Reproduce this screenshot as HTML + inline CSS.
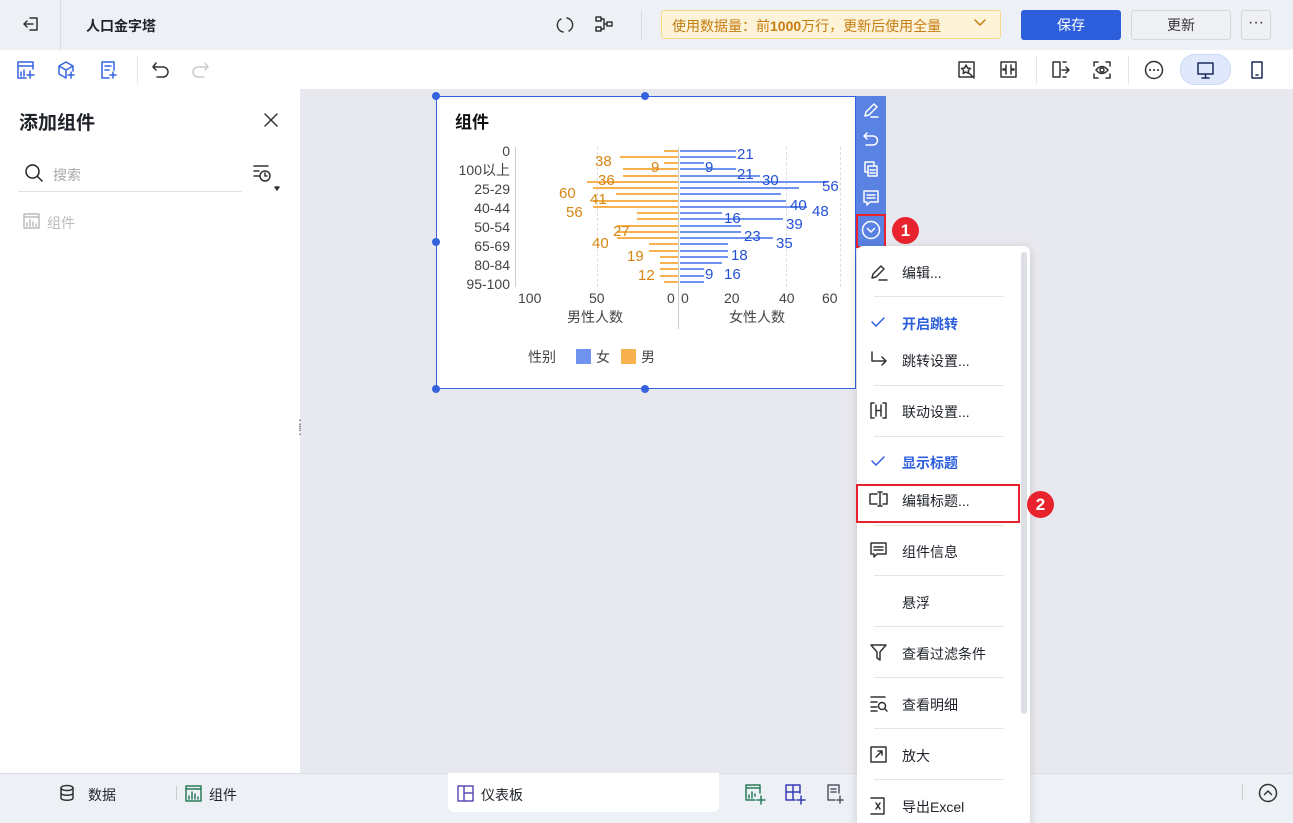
<!DOCTYPE html><html><head><meta charset="utf-8"><style>
*{margin:0;padding:0;box-sizing:border-box}
html,body{width:1293px;height:823px;overflow:hidden}
body{background:#e8e9ee;font-family:"Liberation Sans","Noto Sans CJK SC",sans-serif;position:relative;color:#1f2329}
.a{position:absolute}
.t{font-size:14px;white-space:nowrap}
svg.i{position:absolute;fill:none;stroke-width:1.5;stroke-linecap:round;stroke-linejoin:round}
.bl{position:absolute;height:2px;background:#6f93ee}
.or{position:absolute;height:2px;background:#f7b14f}
.nb{position:absolute;font-size:15px;color:#2451d6;line-height:15px}
.no{position:absolute;font-size:15px;color:#d58612;line-height:15px}
.mi{position:absolute;left:902px;font-size:14px;color:#1f2329}
.sep{position:absolute;left:874px;width:130px;height:1px;background:#e3e5ea}
</style></head><body>
<!-- top bar -->
<div class="a" style="left:0;top:0;width:1293px;height:50px;background:#edf0f5"></div>
<div class="a" style="left:60px;top:0;width:1px;height:50px;background:#dadde3"></div>
<svg class="i" style="left:22px;top:15px" width="18" height="18" stroke="#333"><path d="M8 3h7v12H8M11 9H2M5 6L2 9l3 3"/></svg>
<div class="a t" style="left:86px;top:16px;font-weight:bold;font-size:14px">人口金字塔</div>
<svg class="i" style="left:555px;top:15px" width="20" height="20" stroke="#333" stroke-width="2"><path d="M6 4A7 7 0 0 0 8 17M12 3a7 7 0 0 1 2 13"/></svg>
<svg class="i" style="left:595px;top:15px" width="20" height="20" stroke="#333"><rect x="1" y="2" width="5" height="4"/><rect x="1" y="12" width="5" height="4"/><rect x="12" y="7" width="5" height="4"/><path d="M6 4h3v10H6M9 9h3"/></svg>
<div class="a" style="left:641px;top:10px;width:1px;height:30px;background:#dadde3"></div>
<div class="a" style="left:661px;top:10px;width:340px;height:29px;background:#fdf3d9;border:1px solid #f6d88b;border-radius:3px"></div>
<div class="a t" style="left:672px;top:16px;color:#c67d10">使用数据量：前<b>1000</b>万行，更新后使用全量</div>
<svg class="i" style="left:973px;top:17px" width="14" height="12" stroke="#c67d10" stroke-width="2"><path d="M2 3l5 5 5-5"/></svg>
<div class="a" style="left:1021px;top:10px;width:100px;height:30px;background:#2d5fdc;border-radius:3px;color:#fff;font-size:14px;text-align:center;line-height:30px">保存</div>
<div class="a" style="left:1131px;top:10px;width:100px;height:30px;background:#eef0f4;border:1px solid #d4d7dd;border-radius:3px;font-size:14px;text-align:center;line-height:28px;color:#333">更新</div>
<div class="a" style="left:1241px;top:10px;width:30px;height:30px;background:#eef0f4;border:1px solid #d4d7dd;border-radius:3px;text-align:center;line-height:24px;color:#333">···</div>
<!-- toolbar -->
<div class="a" style="left:0;top:50px;width:1293px;height:39px;background:#fff"></div>
<svg class="i" style="left:16px;top:60px" width="20" height="20" stroke="#3563e0"><path d="M2 2h15v7M2 2v16h8M2 6h15M5 16v-4M8 16v-6M14 11v7M11 15h7"/></svg>
<svg class="i" style="left:57px;top:60px" width="20" height="20" stroke="#3563e0"><path d="M9 2l7 4v5M9 2L2 6v8l7 4M2 6l7 4 7-4M9 10v8M14 12v6M11 15h6"/></svg>
<svg class="i" style="left:100px;top:60px" width="20" height="20" stroke="#3563e0"><path d="M2 2h12v8M2 2v16h7M5 6h6M5 10h4M13 12v6M10 15h6"/></svg>
<div class="a" style="left:137px;top:56px;width:1px;height:28px;background:#e3e5ea"></div>
<svg class="i" style="left:151px;top:60px" width="20" height="20" stroke="#333"><path d="M5 3L2 7l3 3M2 7h10a5 5 0 0 1 0 10H6"/></svg>
<svg class="i" style="left:191px;top:60px" width="20" height="20" stroke="#ccc"><path d="M14 3l3 4-3 3M17 7H7a5 5 0 0 0 0 10h6"/></svg>
<svg class="i" style="left:957px;top:60px" width="20" height="20" stroke="#333"><path d="M2 2h15v15H2zM9 5l1.5 3 3 .5-2.2 2 .5 3L9 12l-2.8 1.5.5-3-2.2-2 3-.5zM13 14l4 4"/></svg>
<svg class="i" style="left:999px;top:60px" width="20" height="20" stroke="#333"><path d="M2 2h15v15H2zM7 5v4H4M12 5v4h3M7 14v-4H4M12 14v-4h3"/></svg>
<div class="a" style="left:1036px;top:56px;width:1px;height:28px;background:#e3e5ea"></div>
<svg class="i" style="left:1051px;top:60px" width="20" height="20" stroke="#333"><path d="M9 2H2v15h7V2M12 2h3M12 17h3M11 10h7M15 7l3 3-3 3"/></svg>
<svg class="i" style="left:1092px;top:60px" width="20" height="20" stroke="#333"><path d="M2 6V2h4M14 2h4v4M18 14v4h-4M6 18H2v-4M4 10q6-7 12 0q-6 7-12 0"/><circle cx="10" cy="10" r="2"/></svg>
<div class="a" style="left:1128px;top:56px;width:1px;height:28px;background:#e3e5ea"></div>
<svg class="i" style="left:1144px;top:60px" width="20" height="20" stroke="#333"><circle cx="10" cy="10" r="8.5"/><path d="M6 10h.1M10 10h.1M14 10h.1" stroke-width="2"/></svg>
<div class="a" style="left:1180px;top:54px;width:51px;height:31px;background:#dfe9fb;border:1px solid #c8d8f5;border-radius:15px"></div>
<svg class="i" style="left:1196px;top:60px" width="20" height="20" stroke="#1a2a5a"><path d="M2 3h15v11H2zM9.5 14v4M6 18h7"/></svg>
<svg class="i" style="left:1249px;top:60px" width="16" height="20" stroke="#1a2a5a"><path d="M3 2h10v16H3zM7 15h2"/></svg>
<!-- left panel -->
<div class="a" style="left:0;top:89px;width:300px;height:684px;background:#fff"></div>
<div class="a" style="left:19px;top:108px;font-size:19px;font-weight:bold;color:#1f2329">添加组件</div>
<svg class="i" style="left:262px;top:111px" width="18" height="18" stroke="#333" stroke-width="1.8"><path d="M3 3l12 12M15 3L3 15"/></svg>
<svg class="i" style="left:24px;top:163px" width="20" height="20" stroke="#222" stroke-width="2"><circle cx="8.5" cy="8.5" r="6.5"/><path d="M13.5 13.5L18 18"/></svg>
<div class="a t" style="left:53px;top:165px;color:#aaa">搜索</div>
<div class="a" style="left:18px;top:191px;width:224px;height:1px;background:#dde0e6"></div>
<svg class="i" style="left:252px;top:163px" width="28" height="28" stroke="#333"><path d="M2 3h14M2 8h5M2 13h5"/><circle cx="13" cy="13" r="5"/><path d="M13 10v3h2"/><path d="M23 24l2 3 2-3z" fill="#333"/></svg>
<svg class="i" style="left:23px;top:213px" width="17" height="16" stroke="#bbb" stroke-width="1"><path d="M1 1h15v14H1zM1 4h15M4 13v-3M7 13V7M10 13v-4M13 13v-2"/></svg>
<div class="a t" style="left:47px;top:213px;color:#bbb">组件</div>
<div class="a t" style="left:294px;top:421px;color:#666;font-size:12px;line-height:6px">⋮<br>⋮</div>
<!-- widget -->
<div class="a" style="left:436px;top:96px;width:420px;height:293px;background:#fff;border:1.5px solid #3563e0"></div>
<div class="a" style="left:455px;top:108px;font-size:17px;font-weight:bold;color:#111">组件</div>
<div class="a" style="left:515px;top:147px;width:1px;height:140px;background:#ccc"></div>
<div class="a" style="left:678px;top:147px;width:1px;height:182px;background:#ccc"></div>
<div class="a" style="left:597px;top:147px;width:0;height:140px;border-left:1px dashed #ddd"></div>
<div class="a" style="left:786px;top:147px;width:0;height:140px;border-left:1px dashed #ddd"></div>
<div class="a" style="left:840px;top:147px;width:0;height:140px;border-left:1px dashed #ddd"></div>
<div class="a" style="left:457px;top:142px;width:53px;text-align:right;font-size:14px;color:#444;line-height:19px">0<br>100以上<br>25-29<br>40-44<br>50-54<br>65-69<br>80-84<br>95-100</div>
<div id="bars"></div>
<div class="a t" style="left:518px;top:290px;color:#444">100</div>
<div class="a t" style="left:589px;top:290px;color:#444">50</div>
<div class="a t" style="left:667px;top:290px;color:#444">0</div>
<div class="a t" style="left:681px;top:290px;color:#444">0</div>
<div class="a t" style="left:724px;top:290px;color:#444">20</div>
<div class="a t" style="left:779px;top:290px;color:#444">40</div>
<div class="a t" style="left:822px;top:290px;color:#444">60</div>
<div class="a t" style="left:567px;top:307px;color:#444">男性人数</div>
<div class="a t" style="left:729px;top:307px;color:#444">女性人数</div>
<div class="a t" style="left:528px;top:347px;color:#444">性别</div>
<div class="a" style="left:576px;top:349px;width:15px;height:15px;background:#6f93ee"></div>
<div class="a t" style="left:596px;top:347px;color:#444">女</div>
<div class="a" style="left:621px;top:349px;width:15px;height:15px;background:#f7b14f"></div>
<div class="a t" style="left:641px;top:347px;color:#444">男</div>
<div class="a" style="left:432px;top:92px;width:8px;height:8px;border-radius:50%;background:#3563e0"></div>
<div class="a" style="left:641px;top:92px;width:8px;height:8px;border-radius:50%;background:#3563e0"></div>
<div class="a" style="left:432px;top:238px;width:8px;height:8px;border-radius:50%;background:#3563e0"></div>
<div class="a" style="left:432px;top:385px;width:8px;height:8px;border-radius:50%;background:#3563e0"></div>
<div class="a" style="left:641px;top:385px;width:8px;height:8px;border-radius:50%;background:#3563e0"></div>
<!-- side toolbar -->
<div class="a" style="left:856px;top:96px;width:30px;height:152px;background:#5a82e2"></div>
<svg class="i" style="left:862px;top:101px" width="18" height="18" stroke="#fff" stroke-width="1.8"><path d="M3 15l1-4 8-8 3 3-8 8zM9 16h7"/></svg>
<svg class="i" style="left:862px;top:131px" width="18" height="18" stroke="#fff" stroke-width="1.8"><path d="M5 2L2 5l3 3M2 5h9a4.5 4.5 0 0 1 0 9H4"/></svg>
<svg class="i" style="left:862px;top:160px" width="18" height="18" stroke="#fff" stroke-width="1.6"><path d="M3 2h9v4M3 2v10h3M6 6h9v10H6zM8 10h5M8 13h5"/></svg>
<svg class="i" style="left:862px;top:189px" width="18" height="18" stroke="#fff" stroke-width="1.6"><path d="M2 2h14v11H8l-3 3v-3H2zM5 6h8M5 9h8"/></svg>
<svg class="i" style="left:861px;top:220px" width="20" height="20" stroke="#fff" stroke-width="1.6"><circle cx="10" cy="10" r="8.5"/><path d="M6.5 8.5L10 12l3.5-3.5"/></svg>
<div class="a" style="left:856px;top:214px;width:30px;height:34px;border:2px solid #e8232e"></div>
<div class="a" style="left:892px;top:217px;width:27px;height:27px;border-radius:50%;background:#e8232e;color:#fff;font-size:17px;font-weight:bold;text-align:center;line-height:27px">1</div>
<!-- bottom bar -->
<div class="a" style="left:0;top:773px;width:1293px;height:50px;background:#edf0f5;border-top:1px solid #dadde3"></div>
<svg class="i" style="left:59px;top:784px" width="18" height="18" stroke="#333"><ellipse cx="8" cy="4" rx="6" ry="2.5"/><path d="M2 4v10c0 3 12 3 12 0V4M2 9c0 3 12 3 12 0"/></svg>
<div class="a t" style="left:88px;top:785px">数据</div>
<div class="a" style="left:176px;top:786px;width:1px;height:14px;background:#ccc"></div>
<svg class="i" style="left:185px;top:785px" width="18" height="18" stroke="#2a7a5a" stroke-width="1.2"><path d="M1 1h15v15H1zM1 4h15M4 14v-3M7 14V7M10 14v-5M13 14v-2"/></svg>
<div class="a t" style="left:209px;top:785px">组件</div>
<div class="a" style="left:448px;top:773px;width:271px;height:39px;background:#fff;border-radius:0 0 6px 6px"></div>
<svg class="i" style="left:457px;top:785px" width="18" height="18" stroke="#5a4fb8" stroke-width="1.3"><path d="M1 1h15v15H1zM7 1v15M7 8h9"/></svg>
<div class="a t" style="left:481px;top:785px">仪表板</div>
<svg class="i" style="left:745px;top:784px" width="22" height="22" stroke="#2a7a5a" stroke-width="1.3"><path d="M1 1h14v8M1 1v15h9M1 4h14M4 14v-3M7 14V8M10 12v-2M16 12v8M12 16h8"/></svg>
<svg class="i" style="left:785px;top:784px" width="22" height="22" stroke="#3a3ab8" stroke-width="1.3"><path d="M1 1h14v8M1 1v15h9M8 1v15M1 8h14M16 12v8M12 16h8"/></svg>
<svg class="i" style="left:826px;top:784px" width="22" height="22" stroke="#556" stroke-width="1.3"><path d="M2 1h11v8M2 1v15h7M5 5h5M5 8h5M14 12v7M11 16h6"/></svg>
<div class="a" style="left:1242px;top:784px;width:1px;height:16px;background:#ccc"></div>
<svg class="i" style="left:1258px;top:783px" width="20" height="20" stroke="#333"><circle cx="10" cy="10" r="8.5"/><path d="M6.5 11.5L10 8l3.5 3.5"/></svg>
<!-- menu -->
<div class="a" style="left:857px;top:246px;width:173px;height:590px;background:#fff;border-radius:6px;box-shadow:0 2px 10px rgba(0,0,0,.15)"></div>
<div class="a" style="left:1021px;top:252px;width:6px;height:462px;background:#dcdfe4;border-radius:3px"></div>
<svg class="i" style="left:869px;top:262px" width="20" height="20" stroke="#333"><path d="M3 16l1-4 8-8 3 3-8 8zM10 18h8"/></svg>
<div class="mi" style="top:263px">编辑...</div>
<div class="sep" style="top:296px"></div>
<svg class="i" style="left:869px;top:313px" width="20" height="20" stroke="#2d5fdc" stroke-width="2.2"><path d="M3 9l4 4 8-8"/></svg>
<div class="mi" style="top:314px;color:#2d5fdc;font-weight:bold">开启跳转</div>
<svg class="i" style="left:869px;top:350px" width="20" height="20" stroke="#333"><path d="M3 2v9h14M13 7l4 4-4 4"/></svg>
<div class="mi" style="top:351px">跳转设置...</div>
<div class="sep" style="top:385px"></div>
<svg class="i" style="left:869px;top:401px" width="20" height="20" stroke="#333"><path d="M5 2H2v15h3M14 2h3v15h-3M7 4v11M12 4v11M7 9.5h5"/></svg>
<div class="mi" style="top:402px">联动设置...</div>
<div class="sep" style="top:436px"></div>
<svg class="i" style="left:869px;top:452px" width="20" height="20" stroke="#2d5fdc" stroke-width="2.2"><path d="M3 9l4 4 8-8"/></svg>
<div class="mi" style="top:453px;color:#2d5fdc;font-weight:bold">显示标题</div>
<div class="a" style="left:856px;top:484px;width:164px;height:39px;border:2px solid #e8232e"></div>
<svg class="i" style="left:868px;top:490px" width="22" height="20" stroke="#333"><path d="M9 4H2v10h7M15 4h4v10h-4M10 2h4M10 16h4M12 2v14"/></svg>
<div class="mi" style="top:491px">编辑标题...</div>
<div class="a" style="left:1027px;top:491px;width:27px;height:27px;border-radius:50%;background:#e8232e;color:#fff;font-size:17px;font-weight:bold;text-align:center;line-height:27px">2</div>
<div class="sep" style="top:525px"></div>
<svg class="i" style="left:869px;top:541px" width="20" height="20" stroke="#333"><path d="M2 2h15v11H8l-3 3v-3H2zM5 6h9M5 9h9"/></svg>
<div class="mi" style="top:542px">组件信息</div>
<div class="sep" style="top:575px"></div>
<div class="mi" style="top:593px">悬浮</div>
<div class="sep" style="top:626px"></div>
<svg class="i" style="left:869px;top:643px" width="20" height="20" stroke="#333"><path d="M2 2h15l-6 7v8l-3-2V9z"/></svg>
<div class="mi" style="top:644px">查看过滤条件</div>
<div class="sep" style="top:677px"></div>
<svg class="i" style="left:869px;top:694px" width="20" height="20" stroke="#333"><path d="M2 3h14M2 8h6M2 13h6M2 17h6"/><circle cx="13" cy="12" r="3.5"/><path d="M15.5 14.5L18 17"/></svg>
<div class="mi" style="top:695px">查看明细</div>
<div class="sep" style="top:728px"></div>
<svg class="i" style="left:869px;top:745px" width="20" height="20" stroke="#333"><path d="M2 2h15v15H2zM7 12l6-6M9 6h4v4"/></svg>
<div class="mi" style="top:746px">放大</div>
<div class="sep" style="top:779px"></div>
<svg class="i" style="left:869px;top:796px" width="20" height="20" stroke="#333"><path d="M2 2h13v16H2M15 2v4M7 7l4 6M11 7l-4 6"/></svg>
<div class="mi" style="top:797px">导出Excel</div>
<script>
var f=[21,21,9,21,30,56,45,38,40,48,16,39,23,23,35,18,18,18,16,9,9,9];
var m=[9,38,9,36,36,60,56,41,56,56,27,27,40,40,40,19,19,12,12,12,12,9];
var h='';
for(var i=0;i<22;i++){var y=149.5+i*6.25;
h+='<div class="bl" style="left:680px;top:'+y+'px;width:'+(f[i]*2.65)+'px"></div>';
h+='<div class="or" style="left:'+(678-m[i]*1.52)+'px;top:'+y+'px;width:'+(m[i]*1.52)+'px"></div>';}
var nb=[[737,147,21],[705,160,9],[737,167,21],[762,173,30],[822,179,56],[790,198,40],[812,204,48],[724,211,16],[786,217,39],[744,229,23],[776,236,35],[731,248,18],[705,267,9],[724,267,16]];
var no=[[595,154,38],[651,160,9],[598,173,36],[559,186,60],[590,192,41],[566,205,56],[613,224,27],[592,236,40],[627,249,19],[638,268,12]];
nb.forEach(function(a){h+='<div class="nb" style="left:'+a[0]+'px;top:'+a[1]+'px">'+a[2]+'</div>'});
no.forEach(function(a){h+='<div class="no" style="left:'+a[0]+'px;top:'+a[1]+'px">'+a[2]+'</div>'});
document.getElementById('bars').innerHTML=h;
</script>
</body></html>
